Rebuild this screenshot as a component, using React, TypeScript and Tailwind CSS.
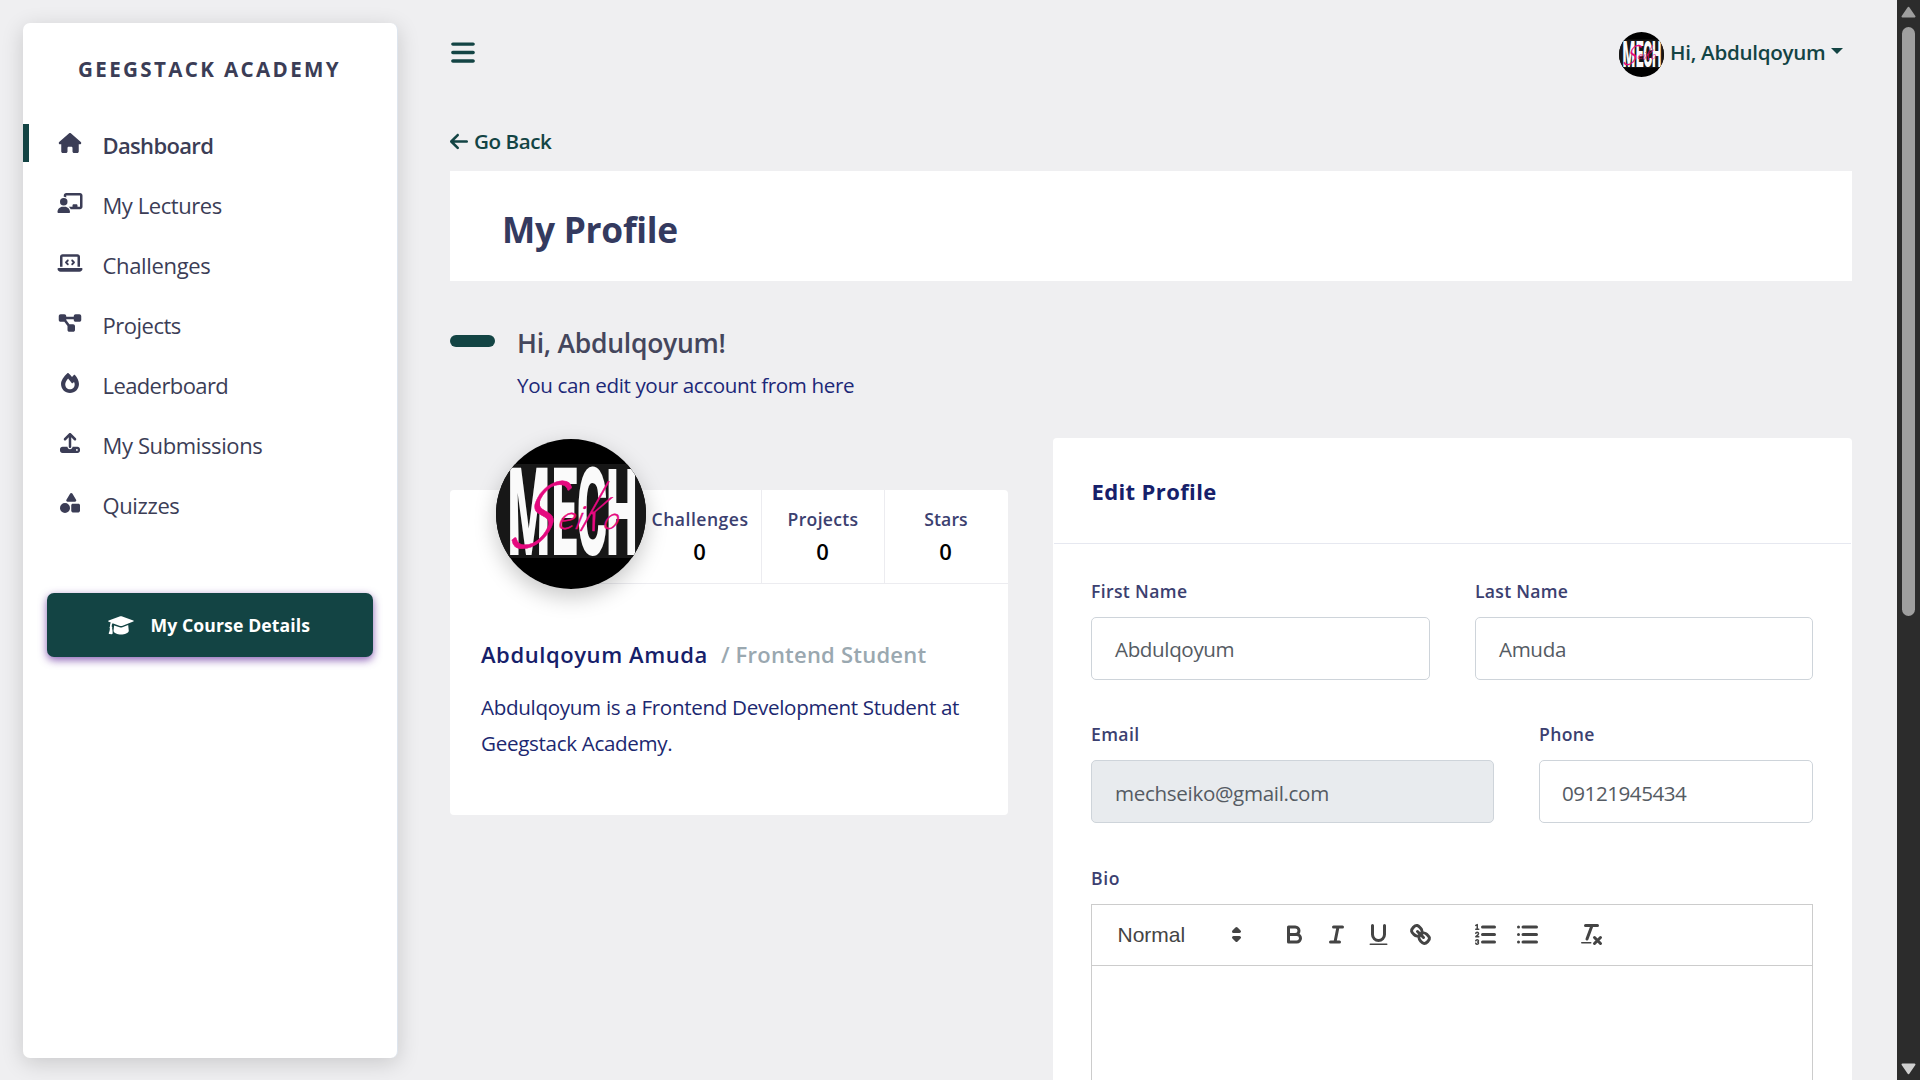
import type { ComponentType, ReactNode } from 'react';
import {
  FaArrowLeft,
  FaBars,
  FaChalkboardUser,
  FaDiagramProject,
  FaHouse,
  FaLaptopCode,
  FaShapes,
  FaUpload,
} from 'react-icons/fa6';

type NavItem = { label: string; icon: ComponentType<{ className?: string }>; text: string; active?: boolean };

function FlameIcon({ className }: { className?: string }) {
  return (
    <svg viewBox="0 0 17.5 19.5" className={className} fill="currentColor" fillRule="evenodd">
      <path d="M6.2.2C6.5-.1 7-.1 7.3.2C8.6 1.4 9.7 2.6 10.7 3.9C11.3 3.2 11.9 2.4 12.5 1.9C12.8 1.6 13.3 1.6 13.6 1.9C15.8 4.1 17.5 8 17.5 10.7C17.5 15.7 13.7 19.5 8.75 19.5C3.8 19.5 0 15.6 0 10.7C0 7.3 2.7 3.4 6.2.2ZM6.9 5.3C5.2 7.1 4.1 9.2 4.1 11C4.1 13.9 6.1 15.9 8.7 15.9C11.4 15.9 13.3 13.9 13.3 11.2C13.3 10.3 13.1 9.5 12.7 8.7L10.8 10.3Z" />
    </svg>
  );
}

function CapIcon({ className }: { className?: string }) {
  return (
    <svg viewBox="0 0 26 19" className={className} fill="currentColor">
      <path d="M12.2.3Q12.9 0 13.6.3L25.3 4.4Q26.3 5 25.3 5.6L14 9.9Q13 10.2 12 9.9L4.6 7.3Q3.6 8.4 3.7 10.6Q4.6 11.4 4.1 12.5Q4.8 15 4.6 17.6Q4.5 18.3 3.8 18.3L1.2 17.9Q.5 17.7.8 17Q1.8 15 1.9 12.6Q1.1 11.5 2 10.5Q1.9 8.2 2.8 6.6L.7 5.8Q-.3 5.2.7 4.6Z" />
      <path d="M6.1 9.4L11.6 11.3Q13 11.7 14.4 11.3L20.2 9.1L20.8 14.9C20.4 17.1 16.7 18.4 13.1 18.4C9.5 18.4 5.9 17.1 5.5 14.9Z" />
    </svg>
  );
}

const navItems: NavItem[] = [
  { label: 'Dashboard', icon: FaHouse, text: 'font-semibold tracking-[-0.66px]', active: true },
  { label: 'My Lectures', icon: FaChalkboardUser, text: 'tracking-[-0.43px]' },
  { label: 'Challenges', icon: FaLaptopCode, text: 'tracking-[-0.34px]' },
  { label: 'Projects', icon: FaDiagramProject, text: 'tracking-[-0.49px]' },
  { label: 'Leaderboard', icon: FlameIcon, text: 'tracking-[-0.6px]' },
  { label: 'My Submissions', icon: FaUpload, text: 'tracking-[-0.38px]' },
  { label: 'Quizzes', icon: FaShapes, text: 'tracking-[-0.38px]' },
];

function Avatar({ className }: { className: string }) {
  return (
    <svg viewBox="0 0 150 150" className={`shrink-0 rounded-full ${className}`} aria-hidden="true">
      <rect width="150" height="150" fill="#000" />
      <rect y="25" width="150" height="94" fill="#171717" />
      <g fill="#fafafa" fontFamily="Roboto" fontWeight="900" fontSize="121.5">
        <text transform="translate(11.6 116.2) scale(.4 1)">M</text>
        <text transform="translate(55.6 116.2) scale(.38 1)">E</text>
        <text transform="translate(81 116.2) scale(.38 1)">C</text>
        <text transform="translate(110.2 116.2) scale(.365 1)">H</text>
      </g>
      <g fill="#e5097f" stroke="#e5097f" strokeWidth=".5" fontFamily="Lato" fontStyle="italic" fontWeight="300">
        <text fontSize="94" transform="translate(11 109) skewX(-24) scale(.86 1)">S</text>
        <text fontSize="32" transform="translate(61 90) skewX(-16) scale(1.1 1)">e</text>
        <text fontSize="32" transform="translate(78 90) skewX(-16)">i</text>
        <text fontSize="68" transform="translate(82 92) skewX(-26) scale(.62 1)">k</text>
        <text fontSize="30" transform="translate(106 90) skewX(-16)">o</text>
      </g>
    </svg>
  );
}

function Sidebar() {
  return (
    <aside className="mt-[23px] ml-[23px] h-[1035px] w-[375px] shrink-0 rounded-[7px] border-r border-[#dee5ee] bg-white pt-[31px] text-[#3b3d56] shadow-[0_5px_22px_rgba(0,0,0,0.16)]">
      <div className="pl-[55px] text-[20.6px] leading-[30px] font-bold tracking-[2.35px] whitespace-nowrap">GEEGSTACK ACADEMY</div>
      <nav className="mt-[31px] flex flex-col">
        {navItems.map(({ label, icon: Icon, text, active }) => (
          <a key={label} className="flex h-[60px] items-center">
            <span className={active ? 'mb-[4px] h-[38px] w-[6px] bg-[#134444]' : 'h-[38px] w-[6px]'} />
            <Icon className="mb-[5px] ml-[28px] h-[20px] w-[26px]" />
            <span className={`ml-[19.5px] text-[22px] leading-[30px] whitespace-nowrap ${text}`}>{label}</span>
          </a>
        ))}
      </nav>
      <button className="mt-[58px] ml-[24px] flex h-[64px] w-[326px] items-center rounded-[7px] bg-[#134444] pl-[61px] text-white shadow-[0_3px_8px_rgba(88,28,150,0.7)]">
        <CapIcon className="h-[19px] w-[26px]" />
        <span className="ml-[16.5px] text-[17.6px] leading-[26px] font-bold tracking-[0.11px] whitespace-nowrap">My Course Details</span>
      </button>
    </aside>
  );
}

function Header() {
  return (
    <header className="flex h-[109px] items-center justify-between text-[#134444]">
      <FaBars className="mb-[3.5px] ml-px h-[27px] w-[24px]" />
      <div className="mr-[9px] flex items-center">
        <Avatar className="h-[45px] w-[45px]" />
        <span className="mb-[5px] ml-[6.5px] text-[20.6px] leading-[30px] font-semibold tracking-[-0.28px] whitespace-nowrap">Hi, Abdulqoyum</span>
        <span className="mb-[7px] ml-[5.5px] border-x-[6px] border-t-[6px] border-x-transparent border-t-[#134444]" />
      </div>
    </header>
  );
}

function Stat({ label, text, last }: { label: string; text: string; last?: boolean }) {
  return (
    <div className={`flex w-[123px] flex-col items-center border-[#ececf0] pt-[16px] ${last ? 'pr-px' : 'border-r'}`}>
      <span className={`text-[17.6px] leading-[27px] font-semibold text-[#3b4070] ${text}`}>{label}</span>
      <span className="mt-[3px] mr-px text-[22px] leading-[30px] font-semibold text-black">0</span>
    </div>
  );
}

function ProfileCard() {
  return (
    <section className="relative mt-[52px] h-[325px] w-[558px] shrink-0 rounded-[4px] bg-white text-[#16206a]">
      <Avatar className="absolute -top-[51px] left-[46px] h-[150px] w-[150px] shadow-[0_8px_22px_rgba(0,0,0,0.22)]" />
      <div className="ml-[140px] flex h-[94px] justify-end border-b border-[#ececf0]">
        <Stat label="Challenges" text="tracking-[0.48px]" />
        <Stat label="Projects" text="tracking-[0.29px]" />
        <Stat label="Stars" text="tracking-[0.13px]" last />
      </div>
      <div className="mt-[53px] flex pl-[31px] text-[22px] leading-[34px] font-semibold whitespace-nowrap">
        <span className="tracking-[0.58px]">Abdulqoyum Amuda</span>
        <span className="ml-[13px] tracking-[0.22px] text-[#9aa8b0]">/ Frontend Student</span>
      </div>
      <p className="mt-[18px] pl-[31px] text-[20.6px] leading-[36px] tracking-[-0.32px] whitespace-nowrap text-[#1c2870]">
        Abdulqoyum is a Frontend Development Student at
        <br />
        Geegstack Academy.
      </p>
    </section>
  );
}

type FieldProps = { label: string; value: string; labelText: string; valueText: string; width: string; disabled?: boolean };

function Field({ label, value, labelText, valueText, width, disabled }: FieldProps) {
  return (
    <div className={width}>
      <div className={`text-[17.6px] leading-[24px] font-semibold text-[#3b4070] ${labelText}`}>{label}</div>
      <div
        className={`mt-[14px] flex h-[63px] items-center rounded-[5px] border border-[#ced4da] text-[20.6px] leading-[30px] text-[#555b63] ${valueText} ${disabled ? 'bg-[#e8ebee]' : 'bg-white'}`}
      >
        {value}
      </div>
    </div>
  );
}

function ToolIcon({ children, className = '' }: { children: ReactNode; className?: string }) {
  return (
    <svg viewBox="0 0 18 18" className={`h-[27px] w-[27px] shrink-0 fill-none stroke-[#444] stroke-2 ${className}`} strokeLinecap="round" strokeLinejoin="round">
      {children}
    </svg>
  );
}

function Editor() {
  return (
    <div className="mt-[14px] h-[300px] w-[722px] border border-[#ccc]">
      <div className="flex h-[61px] items-center border-b border-[#ccc] pb-px pl-[25px] text-[#444]">
        <span className="w-[106px] pl-[0.5px] font-['Liberation_Sans'] text-[21px] leading-[30px]">Normal</span>
        <ToolIcon>
          <polygon points="7 11 9 13 11 11" className="fill-[#444]" />
          <polygon points="7 7 9 5 11 7" className="fill-[#444]" />
        </ToolIcon>
        <ToolIcon className="ml-[31px]">
          <path d="M5,4H9.5A2.5,2.5,0,0,1,12,6.5v0A2.5,2.5,0,0,1,9.5,9H5Z" />
          <path d="M5,9h5.5A2.5,2.5,0,0,1,13,11.5v0A2.5,2.5,0,0,1,10.5,14H5Z" />
        </ToolIcon>
        <ToolIcon className="ml-[15px]">
          <path d="M7 4H13M5 14H11M8 14L10 4" />
        </ToolIcon>
        <ToolIcon className="ml-[15px]">
          <path d="M5,3V9a4.012,4.012,0,0,0,4,4H9a4.012,4.012,0,0,0,4-4V3" />
          <rect x="3" y="15" width="12" height="1" rx=".5" className="fill-[#444] stroke-none" />
        </ToolIcon>
        <ToolIcon className="ml-[15px]">
          <path d="M7 7L11 11" />
          <path d="M8.9,4.577a3.476,3.476,0,0,1,.36,4.679A3.476,3.476,0,0,1,4.577,8.9C3.185,7.5,2.035,6.4,4.217,4.217S7.5,3.185,8.9,4.577Z" />
          <path d="M13.423,9.1a3.476,3.476,0,0,0-4.679-.36,3.476,3.476,0,0,0,.36,4.679c1.392,1.392,2.5,2.542,4.679.36S14.815,10.5,13.423,9.1Z" />
        </ToolIcon>
        <ToolIcon className="ml-[38px]">
          <path d="M7 4H15M7 9H15M7 14H15" />
          <path d="M2.5 5.5H4.5M2.5 2.9L3.5 2.4V5.5" className="stroke-1" />
          <path d="M4.5,10.5h-2c0-.234,1.85-1.076,1.85-2.234A.959.959,0,0,0,2.5,8.156" className="stroke-1" />
          <path d="M2.5,14.846a.959.959,0,0,0,1.85-.109A.7.7,0,0,0,3.75,14a.688.688,0,0,0,.6-.736.959.959,0,0,0-1.85-.109" className="stroke-1" />
        </ToolIcon>
        <ToolIcon className="ml-[15px]">
          <path d="M6 4H15M6 9H15M6 14H15M3 4H3M3 9H3M3 14H3" />
        </ToolIcon>
        <ToolIcon className="ml-[37px]">
          <path d="M5 3H13M6 12L9.35 3M11 11L15 15M15 11L11 15" />
          <rect x="2" y="14" width="7" height="1" rx=".5" className="fill-[#444] stroke-none" />
        </ToolIcon>
      </div>
    </div>
  );
}

function EditCard() {
  return (
    <section className="w-[799px] shrink-0 rounded-t-[4px] bg-white">
      <div className="mx-px h-[106px] border-b border-[#e6e8f0] pt-[36px] pl-[37.5px]">
        <h4 className="text-[22px] leading-[34px] font-bold tracking-[0.38px] text-[#16206a]">Edit Profile</h4>
      </div>
      <div className="pt-[35px] pl-[38px]">
        <div className="flex gap-[45px]">
          <Field label="First Name" value="Abdulqoyum" width="w-[339px]" labelText="tracking-[0.35px]" valueText="pt-px pl-[23px] tracking-[-0.38px]" />
          <Field label="Last Name" value="Amuda" width="w-[338px]" labelText="tracking-[0.28px]" valueText="pt-px pl-[23px] tracking-[-0.36px]" />
        </div>
        <div className="mt-[42px] flex gap-[45px]">
          <Field label="Email" value="mechseiko@gmail.com" width="w-[403px]" labelText="tracking-[0.38px]" valueText="pt-[2px] pl-[23px] tracking-[-0.33px]" disabled />
          <Field label="Phone" value="09121945434" width="w-[274px]" labelText="tracking-[0.34px]" valueText="pt-[2px] pl-[22px] tracking-[-0.47px]" />
        </div>
        <div className="mt-[43px] text-[17.6px] leading-[24px] font-semibold tracking-[0.6px] text-[#3b4070]">Bio</div>
        <Editor />
      </div>
    </section>
  );
}

function Scrollbar() {
  return (
    <div className="flex h-full w-[23px] shrink-0 flex-col items-center bg-[#2c2c2c]">
      <svg viewBox="0 0 15 12" className="mt-[6px] h-[12px] w-[15px] fill-[#9f9f9f] stroke-[#9f9f9f] stroke-2" strokeLinejoin="round">
        <path d="M7.5 1.8L13.5 10.5H1.5Z" />
      </svg>
      <div className="mt-[9px] h-[589px] w-[13px] rounded-full bg-[#9f9f9f]" />
      <svg viewBox="0 0 15 12" className="mt-auto mb-[5px] h-[12px] w-[15px] fill-[#cfcfcf] stroke-[#cfcfcf] stroke-2" strokeLinejoin="round">
        <path d="M7.5 10.2L13.5 1.5H1.5Z" />
      </svg>
    </div>
  );
}

export default function App() {
  return (
    <div className="flex h-[1080px] w-[1920px] overflow-hidden bg-[#efeff1] font-['Open_Sans',sans-serif]">
      <Sidebar />
      <main className="ml-[52px] w-[1402px] shrink-0">
        <Header />
        <a className="mt-[16px] flex h-[32px] items-center text-[#134444]">
          <FaArrowLeft className="h-[21px] w-[18px]" />
          <span className="ml-[6px] text-[20.6px] leading-[32px] font-semibold tracking-[-0.45px]">Go Back</span>
        </a>
        <div className="mt-[14px] flex h-[110px] items-center bg-white pt-[6px] pl-[52px]">
          <h1 className="text-[35.3px] leading-[44px] font-bold tracking-[-0.28px] text-[#343a5f]">My Profile</h1>
        </div>
        <div className="mt-[42px] flex">
          <span className="mt-[12px] h-[12px] w-[45px] rounded-full bg-[#134444]" />
          <div className="ml-[22px]">
            <h2 className="text-[26.5px] leading-[40px] font-semibold tracking-[-0.25px] text-[#44465c]">Hi, Abdulqoyum!</h2>
            <p className="mt-[7px] text-[20.6px] leading-[30px] tracking-[-0.37px] text-[#1c2878]">You can edit your account from here</p>
          </div>
        </div>
        <div className="mt-[38px] flex items-start gap-[45px]">
          <ProfileCard />
          <EditCard />
        </div>
      </main>
      <div className="ml-auto h-full">
        <Scrollbar />
      </div>
    </div>
  );
}
